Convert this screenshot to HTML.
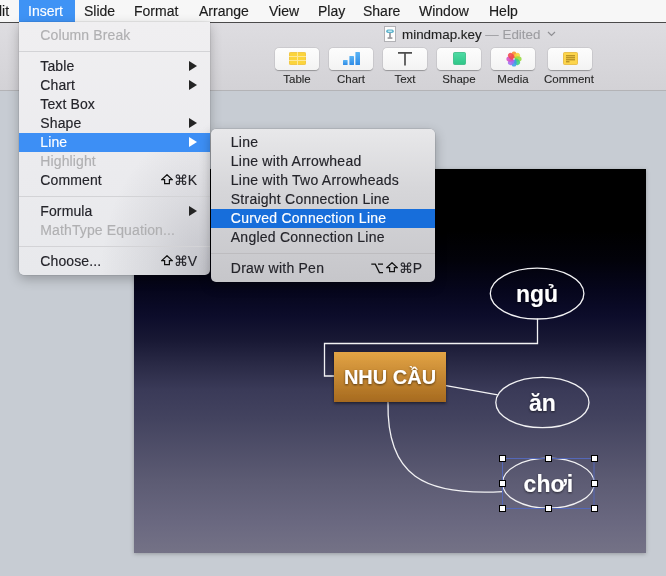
<!DOCTYPE html>
<html><head><meta charset="utf-8">
<style>
*{margin:0;padding:0;box-sizing:border-box}
html,body{width:666px;height:576px;overflow:hidden}
body{-webkit-font-smoothing:antialiased;position:relative;background:#c7ccd3;font-family:"Liberation Sans",sans-serif;font-size:14px;color:#222}
.abs{position:absolute}
#menubar{will-change:transform;left:0;top:0;width:666px;height:22px;background:#f7f7f7}
#menubar .it{position:absolute;top:2px;line-height:19px;color:#1c1c1c;-webkit-text-stroke:.15px currentColor;white-space:nowrap}
#mbline{left:0;top:22px;width:666px;height:1px;background:#4a4a4a}
#toolbar{left:0;top:23px;width:666px;height:67px;background:linear-gradient(#dedde1,#d3d2d6)}
#tbline{left:0;top:90px;width:666px;height:1px;background:#b3b3b6}
.btn{position:absolute;top:48px;width:44px;height:22px;border-radius:4px;background:linear-gradient(#fdfdfd,#f3f3f3);box-shadow:0 0.5px 1px rgba(0,0,0,.28),0 0 0 .5px rgba(0,0,0,.08)}
.lbl{will-change:transform;position:absolute;top:72px;font-size:11.5px;line-height:14px;color:#262626;-webkit-text-stroke:.1px currentColor;white-space:nowrap;text-align:center}
#slide{left:134px;top:169px;width:512px;height:384px;background:linear-gradient(#000 0%,#000 16%,#02020a 24%,#06061c 31.5%,#0c0c2a 38%,#181834 44.5%,#2a2a46 51%,#3a3a58 57.5%,#43435f 65%,#5c5b73 81%,#6a6880 92%,#747286 100%);box-shadow:0 1px 4px rgba(0,0,0,.25)}
.menu{position:absolute;will-change:transform;background:#eeedee}
#m1{background:radial-gradient(ellipse 110px 150px at 100% 100%,rgba(30,30,50,.2),rgba(30,30,50,.08) 55%,rgba(30,30,50,0)),linear-gradient(#f0eff1,#ebebee 60%,#e8e9ec);left:19px;top:22px;width:191px;height:253px;border-radius:0 0 5px 5px;box-shadow:0 4px 12px rgba(0,0,0,.25),0 0 0 .5px rgba(0,0,0,.12)}
#m2{left:211px;top:129px;width:224px;height:153px;border-radius:5px;background:linear-gradient(#e8e8ea,#d6d6d9 40%,#c6c6ca);box-shadow:0 4px 12px rgba(0,0,0,.3),0 0 0 .5px rgba(0,0,0,.15)}
.row{position:absolute;left:0;height:19px;width:100%;line-height:19px;white-space:nowrap;color:#24242a}
.row span.t{position:absolute;left:21.3px;top:0;letter-spacing:.12px;-webkit-text-stroke:.15px currentColor}
#m2 .row span.t{left:19.8px;letter-spacing:.24px}
.row.dis{color:#b0b0b2}
.row.sel{background:#3d8ff5;color:#fff}
#m2 .row.sel{background:#176edb}
.sep{position:absolute;left:0;width:100%;height:1px;background:#d3d3d6}
.arr{position:absolute;left:170px;top:4px;width:0;height:0;border-top:5px solid transparent;border-bottom:5px solid transparent;border-left:8px solid #242424}
.sel .arr{border-left-color:#fff}
.sc{position:absolute;top:0;right:13px;-webkit-text-stroke:.12px currentColor}
</style></head><body>

<!-- Menubar -->
<div id="menubar" class="abs">
  <div class="it" style="left:-15px">Edit</div>
  <div class="abs" style="left:19px;top:0;width:56px;height:22px;background:#3f93f5"></div>
  <div class="it" style="left:28px;color:#fff">Insert</div>
  <div class="it" style="left:84px">Slide</div>
  <div class="it" style="left:134px">Format</div>
  <div class="it" style="left:199px">Arrange</div>
  <div class="it" style="left:269px">View</div>
  <div class="it" style="left:318px">Play</div>
  <div class="it" style="left:363px">Share</div>
  <div class="it" style="left:419px">Window</div>
  <div class="it" style="left:489px">Help</div>
</div>
<div id="mbline" class="abs"></div>

<!-- Toolbar -->
<div id="toolbar" class="abs"></div>
<div id="tbline" class="abs"></div>
<!-- title -->
<svg class="abs" style="left:384px;top:26px" width="12" height="16" viewBox="0 0 12 16">
  <rect x=".5" y=".5" width="11" height="15" fill="#fdfdfd" stroke="#b2b2b6"/>
  <rect x="2.2" y="3.6" width="7.6" height="3.4" rx="1.7" fill="#5fb3cc"/>
  <rect x="3.8" y="4.4" width="4.4" height="1.6" rx=".8" fill="#bfe8f2"/>
  <rect x="5.2" y="7" width="1.6" height="4.6" fill="#8e8e94"/>
  <rect x="3.6" y="11.4" width="4.8" height="1.3" fill="#7c7c82"/>
</svg>
<div class="abs" style="will-change:transform;left:402px;top:27px;font-size:13.4px;line-height:16px;color:#222;-webkit-text-stroke:.12px currentColor;white-space:nowrap">mindmap.key <span style="color:#9d9da1">— Edited</span></div>
<svg class="abs" style="left:547px;top:31px" width="9" height="6" viewBox="0 0 9 6"><path d="M1 1 L4.5 4.5 L8 1" fill="none" stroke="#8f8f93" stroke-width="1.2"/></svg>
<!-- buttons -->
<div class="btn" style="left:275px"></div>
<div class="btn" style="left:329px"></div>
<div class="btn" style="left:383px"></div>
<div class="btn" style="left:437px"></div>
<div class="btn" style="left:491px"></div>
<div class="btn" style="left:548px"></div>
<svg class="abs" style="left:289px;top:52px" width="17" height="13" viewBox="0 0 17 13">
  <rect x=".4" y=".4" width="16.2" height="12.2" rx="1" fill="#fbd43c" stroke="#efbd2a" stroke-width=".8"/>
  <path d="M0 4.5 H17 M0 8.5 H17 M8.5 0 V13" stroke="#fde898" stroke-width="1"/>
</svg>
<svg class="abs" style="left:343px;top:51px" width="18" height="14" viewBox="0 0 18 14">
  <defs><linearGradient id="cb" x1="0" y1="0" x2="0" y2="1"><stop offset="0" stop-color="#5ab4f5"/><stop offset="1" stop-color="#2f8be6"/></linearGradient></defs>
  <rect x="0" y="9" width="4.6" height="5" rx=".6" fill="url(#cb)"/>
  <rect x="6.4" y="5" width="4.6" height="9" rx=".6" fill="url(#cb)"/>
  <rect x="12.4" y="1" width="4.6" height="13" rx=".6" fill="url(#cb)"/>
</svg>
<svg class="abs" style="left:397px;top:51px" width="16" height="15" viewBox="0 0 16 15">
  <path d="M1 1.8 H15 M8 1.8 V14.5" stroke="#4e4e4e" stroke-width="1.7" fill="none"/>
</svg>
<svg class="abs" style="left:453px;top:52px" width="13" height="13" viewBox="0 0 13 13">
  <defs><linearGradient id="sg" x1="0" y1="0" x2="0" y2="1"><stop offset="0" stop-color="#4fdba4"/><stop offset="1" stop-color="#2fc688"/></linearGradient></defs>
  <rect x=".5" y=".5" width="12" height="12" rx="1" fill="url(#sg)" stroke="#35b983" stroke-width=".8"/>
</svg>
<svg class="abs" style="left:505.5px;top:50.5px" width="16" height="16" viewBox="-8 -8 16 16"><ellipse cx="0" cy="-3.9" rx="2.7" ry="3.7" fill="#f98c2c" opacity=".88" transform="rotate(0)"/><ellipse cx="0" cy="-3.9" rx="2.7" ry="3.7" fill="#f6d33a" opacity=".88" transform="rotate(45)"/><ellipse cx="0" cy="-3.9" rx="2.7" ry="3.7" fill="#96d93e" opacity=".88" transform="rotate(90)"/><ellipse cx="0" cy="-3.9" rx="2.7" ry="3.7" fill="#3ccf80" opacity=".88" transform="rotate(135)"/><ellipse cx="0" cy="-3.9" rx="2.7" ry="3.7" fill="#3a9de8" opacity=".88" transform="rotate(180)"/><ellipse cx="0" cy="-3.9" rx="2.7" ry="3.7" fill="#a36cf0" opacity=".88" transform="rotate(225)"/><ellipse cx="0" cy="-3.9" rx="2.7" ry="3.7" fill="#d54ec3" opacity=".88" transform="rotate(270)"/><ellipse cx="0" cy="-3.9" rx="2.7" ry="3.7" fill="#f1484f" opacity=".88" transform="rotate(315)"/><circle cx="0" cy="0" r=".8" fill="#fff"/></svg>
<svg class="abs" style="left:563px;top:52px" width="15" height="13" viewBox="0 0 15 13">
  <rect x=".5" y=".5" width="14" height="12" rx="1" fill="#fcd54c" stroke="#e5b63a" stroke-width=".8"/>
  <path d="M3 3.8 H12 M3 5.8 H12 M3 7.8 H12 M3 9.8 H6.5" stroke="#a07a18" stroke-width="1"/>
</svg>
<div class="lbl" style="left:275px;width:44px">Table</div>
<div class="lbl" style="left:329px;width:44px">Chart</div>
<div class="lbl" style="left:383px;width:44px">Text</div>
<div class="lbl" style="left:437px;width:44px">Shape</div>
<div class="lbl" style="left:491px;width:44px">Media</div>
<div class="lbl" style="left:539.3px;width:60px">Comment</div>

<!-- Canvas + slide -->
<div id="slide" class="abs"></div>
<svg class="abs" style="left:0;top:0;will-change:transform" width="666" height="576" viewBox="0 0 666 576">
  <defs>
    <linearGradient id="og" x1="0" y1="0" x2="0" y2="1"><stop offset="0" stop-color="#e3a445"/><stop offset="1" stop-color="#a66a1f"/></linearGradient>
    <filter id="ds" x="-20%" y="-20%" width="140%" height="150%"><feDropShadow dx="0" dy="1.5" stdDeviation="1.5" flood-color="#000" flood-opacity=".5"/></filter>
    <filter id="ts" x="-20%" y="-20%" width="140%" height="150%"><feDropShadow dx="0" dy="1" stdDeviation=".8" flood-color="#000" flood-opacity=".6"/></filter>
  </defs>
  <g fill="none" stroke="#f2f2f4" stroke-width="1.3">
    <path d="M537.5 318.5 V343.5 H324.5 V376 H334"/>
    <path d="M446 385.7 L497.7 394.8"/>
    <path d="M388 402 C386.5 476 424 496 502.5 491.6"/>
    <ellipse cx="537.1" cy="293.6" rx="46.8" ry="25.4"/>
    <ellipse cx="542.4" cy="402.5" rx="46.6" ry="25.2"/>
    <ellipse cx="548.4" cy="483.2" rx="46" ry="25"/>
  </g>
  <rect x="334" y="352" width="112" height="50" fill="url(#og)" filter="url(#ds)"/>
  <g font-family="Liberation Sans" font-weight="bold" fill="#fff" text-anchor="middle" filter="url(#ts)">
    <text x="390" y="383.8" font-size="20">NHU CẦU</text>
    <text x="537" y="301.8" font-size="23">ngủ</text>
    <text x="542.4" y="411" font-size="23">ăn</text>
    <text x="548.4" y="491.5" font-size="23">chơi</text>
  </g>
  <rect x="502.5" y="458.5" width="91.5" height="50" fill="none" stroke="#5468b8" stroke-width="1"/>
  <g fill="#fff" stroke="#000" stroke-width="1">
    <rect x="499.5" y="455.5" width="6" height="6"/>
    <rect x="545.5" y="455.5" width="6" height="6"/>
    <rect x="591.5" y="455.5" width="6" height="6"/>
    <rect x="499.5" y="480.5" width="6" height="6"/>
    <rect x="591.5" y="480.5" width="6" height="6"/>
    <rect x="499.5" y="505.5" width="6" height="6"/>
    <rect x="545.5" y="505.5" width="6" height="6"/>
    <rect x="591.5" y="505.5" width="6" height="6"/>
  </g>
</svg>

<!-- Insert menu -->
<div id="m1" class="menu">
  <div class="row dis" style="top:4px"><span class="t">Column Break</span></div>
  <div class="sep" style="top:29px"></div>
  <div class="row" style="top:35px"><span class="t">Table</span><i class="arr"></i></div>
  <div class="row" style="top:54px"><span class="t">Chart</span><i class="arr"></i></div>
  <div class="row" style="top:73px"><span class="t">Text Box</span></div>
  <div class="row" style="top:92px"><span class="t">Shape</span><i class="arr"></i></div>
  <div class="row sel" style="top:111px"><span class="t">Line</span><i class="arr"></i></div>
  <div class="row dis" style="top:130px"><span class="t">Highlight</span></div>
  <div class="row" style="top:149px"><span class="t">Comment</span><svg class="abs" style="left:142px;top:3px" width="12" height="11" viewBox="0 0 12 11"><path d="M6 .7 L11.3 5.6 H8.4 V9.7 H3.6 V5.6 H.7 Z" fill="none" stroke="#111" stroke-width="1.2" stroke-linejoin="miter"/></svg><span class="sc">⌘K</span></div>
  <div class="sep" style="top:174px"></div>
  <div class="row" style="top:180px"><span class="t">Formula</span><i class="arr"></i></div>
  <div class="row dis" style="top:199px"><span class="t">MathType Equation...</span></div>
  <div class="sep" style="top:224px"></div>
  <div class="row" style="top:230px"><span class="t">Choose...</span><svg class="abs" style="left:142px;top:3px" width="12" height="11" viewBox="0 0 12 11"><path d="M6 .7 L11.3 5.6 H8.4 V9.7 H3.6 V5.6 H.7 Z" fill="none" stroke="#111" stroke-width="1.2" stroke-linejoin="miter"/></svg><span class="sc">⌘V</span></div>
</div>

<!-- Line submenu -->
<div id="m2" class="menu">
  <div class="row" style="top:4px"><span class="t">Line</span></div>
  <div class="row" style="top:23px"><span class="t">Line with Arrowhead</span></div>
  <div class="row" style="top:42px"><span class="t">Line with Two Arrowheads</span></div>
  <div class="row" style="top:61px"><span class="t">Straight Connection Line</span></div>
  <div class="row sel" style="top:80px"><span class="t">Curved Connection Line</span></div>
  <div class="row" style="top:99px"><span class="t">Angled Connection Line</span></div>
  <div class="sep" style="top:124px;background:#bdbcbf"></div>
  <div class="row" style="top:130px"><span class="t">Draw with Pen</span><svg class="abs" style="left:160px;top:3.5px" width="12" height="11" viewBox="0 0 12 11"><path d="M.3 1.2 H4.3 L8.4 9.6 H12 M7 1.2 H12" fill="none" stroke="#111" stroke-width="1.3"/></svg><svg class="abs" style="left:175px;top:3px" width="12" height="11" viewBox="0 0 12 11"><path d="M6 .7 L11.3 5.6 H8.4 V9.7 H3.6 V5.6 H.7 Z" fill="none" stroke="#111" stroke-width="1.2" stroke-linejoin="miter"/></svg><span class="sc">⌘P</span></div>
</div>

</body></html>
